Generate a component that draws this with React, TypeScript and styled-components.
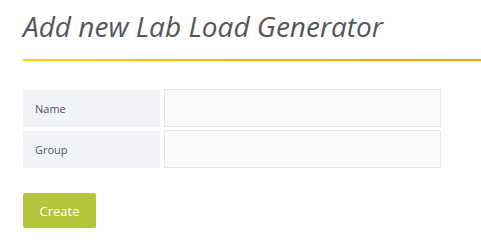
import styled, { createGlobalStyle } from "styled-components";

const GlobalStyle = createGlobalStyle`
  html, body {
    margin: 0;
    padding: 0;
    background: #fff;
    font-family: "Open Sans", "Liberation Sans", sans-serif;
  }
`;

const Page = styled.div`
  padding: 8px 0 0 23px;
`;

const Title = styled.h1`
  margin: 0;
  font-size: 28px;
  font-weight: 400;
  font-style: italic;
  color: #555659;
  line-height: 36px;
`;

const Rule = styled.div`
  height: 2px;
  margin-top: 15px;
  background: linear-gradient(to right, #ffd000, #ff9a00);
`;

const Form = styled.div`
  display: grid;
  grid-template-columns: 137px 277px;
  grid-auto-rows: 37px;
  column-gap: 4px;
  row-gap: 4px;
  margin-top: 29px;
`;

const Label = styled.div`
  background: #f2f3f7;
  color: #4d535e;
  font-size: 11px;
  display: flex;
  align-items: center;
  padding-left: 12px;
`;

const Field = styled.input`
  box-sizing: border-box;
  margin: -1px 0 0;
  height: 38px;
  border: 1px solid #e6e6e6;
  background: #fafafa;
  outline: none;
  font-family: inherit;
`;

const Button = styled.button`
  margin-top: 25px;
  width: 73px;
  height: 35px;
  border: none;
  border-radius: 2px;
  background: #b3c63b;
  color: #fff;
  font-family: inherit;
  font-size: 13px;
  cursor: pointer;
`;

export default function App() {
  return (
    <>
      <GlobalStyle />
      <Page>
        <Title>Add new Lab Load Generator</Title>
        <Rule />
        <Form>
          <Label>Name</Label>
          <Field />
          <Label>Group</Label>
          <Field />
        </Form>
        <Button>Create</Button>
      </Page>
    </>
  );
}
